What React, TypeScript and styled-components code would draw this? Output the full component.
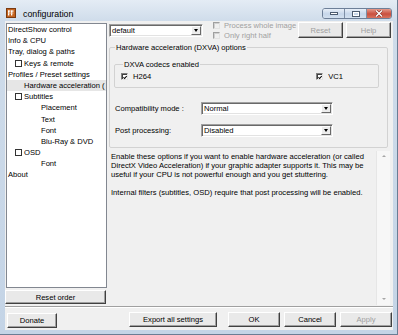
import React from "react";
import styled, { createGlobalStyle } from "styled-components";

const GlobalStyle = createGlobalStyle`
  html, body { margin: 0; padding: 0; background: #4a8ccc; }
  body {
    font-family: "Liberation Sans", Arial, sans-serif;
    font-size: 7.6px;
    color: #000;
  }
  * { box-sizing: border-box; }
`;

const Window = styled.div`
  width: 398px;
  height: 335px;
  background: linear-gradient(#e4ecf5, #cfdcea 21px, #c4d4e6);
  border-right: 1px solid #6a7d94;
  border-bottom: 1px solid #6a7d94;
  display: flex;
  flex-direction: column;
  overflow: hidden;
`;

const TitleBar = styled.div`
  height: 21px;
  flex: none;
  display: flex;
  align-items: flex-start;
  padding: 8px 5px 0 6px;
`;

const AppIcon = styled.svg`
  width: 10px;
  height: 10px;
  flex: none;
`;

const Caption = styled.div`
  margin-left: 7px;
  font-size: 8.8px;
  line-height: 12px;
  color: #000;
`;

const CaptionButtons = styled.div`
  margin-left: auto;
  display: flex;
  border: 1px solid #6d7f98;
  border-radius: 3px;
  overflow: hidden;
  height: 11px;
`;

const CaptionButton = styled.div<{ $close?: boolean; $w: number }>`
  width: ${p => p.$w}px;
  height: 100%;
  display: flex;
  align-items: center;
  justify-content: center;
  background: ${p =>
    p.$close
      ? "linear-gradient(#e59a8c, #c9503f 55%, #d8735f)"
      : "linear-gradient(#e8eff8, #c6d6ea 55%, #d3e0ef)"};
  & + & {
    border-left: 1px solid #7d8ea5;
  }
`;

const Client = styled.div`
  flex: 1;
  margin: 0 4px 4px 5px;
  background: #f0f0f0;
  display: flex;
  flex-direction: column;
`;

const Main = styled.div`
  height: 285px;
  display: flex;
`;

const LeftColumn = styled.div`
  width: 102px;
  display: flex;
  flex-direction: column;
`;

const Tree = styled.div`
  margin: 2px 0 0 1px;
  width: 101px;
  height: 265px;
  background: #fff;
  border: 1px solid #828790;
  overflow: hidden;
`;

const TreeRow = styled.div<{ $indent: number; $selected?: boolean }>`
  height: 11.2px;
  line-height: 11.2px;
  display: flex;
  align-items: center;
  padding-left: ${p => p.$indent}px;
  white-space: nowrap;
  background: ${p => (p.$selected ? "#e6e6e6" : "transparent")};
`;

const TreeCheck = styled.span`
  width: 7px;
  height: 7px;
  border: 1px solid #333;
  background: #fff;
  margin-right: 2px;
  flex: none;
`;

const Button = styled.div<{ $w: number; $h?: number; $disabled?: boolean }>`
  width: ${p => p.$w}px;
  height: ${p => p.$h ?? 15}px;
  flex: none;
  display: flex;
  align-items: center;
  justify-content: center;
  background: #e9e9e9;
  border-top: 1px solid #fff;
  border-left: 1px solid #fff;
  border-right: 1px solid #404040;
  border-bottom: 1px solid #404040;
  box-shadow: inset -1px -1px 0 #a0a0a0;
  color: ${p => (p.$disabled ? "#a0a0a0" : "#000")};
  white-space: nowrap;
`;

const RightColumn = styled.div`
  width: 283px;
  margin-left: 2px;
  display: flex;
  flex-direction: column;
`;

const TopRow = styled.div`
  height: 19px;
  display: flex;
  align-items: flex-start;
`;

const Combo = styled.div<{ $w: number }>`
  width: ${p => p.$w}px;
  height: 13px;
  flex: none;
  display: flex;
  align-items: stretch;
  background: #fff;
  border-top: 1px solid #a0a0a0;
  border-left: 1px solid #a0a0a0;
  border-right: 1px solid #fff;
  border-bottom: 1px solid #fff;
  box-shadow: inset 1px 1px 0 #696969, inset -1px -1px 0 #e3e3e3;
  padding: 1px;
`;

const ComboText = styled.div`
  flex: 1;
  padding-left: 1px;
  line-height: 10px;
`;

const ComboArrow = styled.div`
  width: 10px;
  flex: none;
  background: #ececec;
  border-top: 1px solid #fff;
  border-left: 1px solid #fff;
  border-right: 1px solid #696969;
  border-bottom: 1px solid #696969;
  display: flex;
  align-items: center;
  justify-content: center;
  &::after {
    content: "";
    border-left: 2.5px solid transparent;
    border-right: 2.5px solid transparent;
    border-top: 3px solid #000;
  }
`;

const CheckColumn = styled.div`
  margin: -1px 0 0 10px;
  display: flex;
  flex-direction: column;
`;

const CheckLine = styled.div<{ $disabled?: boolean }>`
  height: 10px;
  display: flex;
  align-items: center;
  gap: 4px;
  color: ${p => (p.$disabled ? "#a0a0a0" : "#000")};
  white-space: nowrap;
`;

const Box = styled.span<{ $disabled?: boolean }>`
  width: 7px;
  height: 7px;
  flex: none;
  display: flex;
  background: ${p => (p.$disabled ? "#f0f0f0" : "#fff")};
  border-top: 1px solid ${p => (p.$disabled ? "#a0a0a0" : "#808080")};
  border-left: 1px solid ${p => (p.$disabled ? "#a0a0a0" : "#808080")};
  border-right: 1px solid #e3e3e3;
  border-bottom: 1px solid #e3e3e3;
  box-shadow: inset 1px 1px 0 ${p => (p.$disabled ? "#d0d0d0" : "#404040")};
`;

const TopButtons = styled.div`
  margin: 1px 1px 0 auto;
  display: flex;
  gap: 3px;
`;

const Group = styled.fieldset<{ $pad: string }>`
  margin: 0;
  padding: ${p => p.$pad};
  border: 1px solid #d2d2d2;
  border-radius: 2px;
  min-width: 0;
`;

const Legend = styled.legend`
  padding: 0 1px;
  margin-left: 1px;
  line-height: 9px;
  white-space: nowrap;
`;

const OuterGroup = styled(Group)`
  width: 279px;
  margin-top: 2.5px;
`;

const InnerGroup = styled(Group)`
  width: 265px;
  margin-top: 8px;
`;

const CodecRow = styled.div`
  display: flex;
  align-items: center;
  height: 10px;
`;

const Codec = styled.div<{ $right?: boolean }>`
  display: flex;
  align-items: center;
  gap: 5px;
  margin-left: ${p => (p.$right ? "auto" : "0")};
`;

const FieldRow = styled.div<{ $top: number }>`
  display: flex;
  align-items: center;
  height: 13px;
  margin-top: ${p => p.$top}px;
`;

const FieldLabel = styled.div`
  width: 87px;
  padding-left: 1px;
  white-space: nowrap;
`;

const Description = styled.div`
  width: 281px;
  height: 156px;
  margin-top: 1px;
  display: flex;
`;

const DescText = styled.div`
  flex: 1;
  padding: 3.5px 0 0 2px;
  line-height: 9px;
  white-space: nowrap;
  color: #000;
`;

const ScrollBar = styled.div`
  width: 14px;
  margin-top: 2px;
  background: #f7f7f7;
  border-left: 1px solid #e6e6e6;
  display: flex;
  flex-direction: column;
  justify-content: space-between;
  align-items: center;
  padding: 4px 0 5px;
`;

const Arrow = styled.span<{ $down?: boolean }>`
  border-left: 2.5px solid transparent;
  border-right: 2.5px solid transparent;
  ${p => (p.$down ? "border-top" : "border-bottom")}: 2.5px solid #a6a6a6;
`;

const Separator = styled.div`
  height: 2px;
  border-top: 1px solid #a0a0a0;
  border-bottom: 1px solid #fff;
`;

const BottomBar = styled.div`
  flex: 1;
  display: flex;
  align-items: flex-start;
  padding: 4px 1px 0 2px;
`;

const BottomRight = styled.div`
  margin-left: auto;
  display: flex;
  gap: 4px;
`;

const Check = () => (
  <svg width="5" height="5" viewBox="0 0 5 5" style={{ margin: "0.5px" }}>
    <path d="M0.5 2.2 L2 3.8 L4.6 0.6" stroke="#000" strokeWidth="1.3" fill="none" />
  </svg>
);

const treeItems = [
  { text: "DirectShow control", indent: 1 },
  { text: "Info & CPU", indent: 1 },
  { text: "Tray, dialog & paths", indent: 1 },
  { text: "Keys & remote", indent: 8, check: true },
  { text: "Profiles / Preset settings", indent: 1 },
  { text: "Hardware acceleration (", indent: 17, selected: true },
  { text: "Subtitles", indent: 8, check: true },
  { text: "Placement", indent: 34 },
  { text: "Text", indent: 34 },
  { text: "Font", indent: 34 },
  { text: "Blu-Ray & DVD", indent: 34 },
  { text: "OSD", indent: 8, check: true },
  { text: "Font", indent: 34 },
  { text: "About", indent: 1 },
];

export default function App() {
  return (
    <>
      <GlobalStyle />
      <Window>
        <TitleBar>
          <AppIcon viewBox="0 0 10 10">
            <rect x="0.5" y="0.5" width="9" height="9" fill="#c4631f" stroke="#7a3a10" />
            <rect x="2" y="2.5" width="1.3" height="5" fill="#fff" />
            <rect x="2" y="2.5" width="2.6" height="1.1" fill="#fff" />
            <rect x="5" y="2.5" width="1.3" height="5" fill="#fff" />
            <rect x="5" y="2.5" width="2.6" height="1.1" fill="#fff" />
            <rect x="2" y="4.6" width="5.5" height="0.9" fill="#f3c9a8" />
          </AppIcon>
          <Caption>configuration</Caption>
          <CaptionButtons>
            <CaptionButton $w={21}>
              <svg width="8" height="3" viewBox="0 0 8 3">
                <rect x="0.5" y="0.5" width="7" height="2" fill="#fff" stroke="#4d5c70" />
              </svg>
            </CaptionButton>
            <CaptionButton $w={22}>
              <svg width="8" height="6" viewBox="0 0 8 6">
                <rect x="0.5" y="0.5" width="7" height="5" fill="none" stroke="#4d5c70" />
                <rect x="1.5" y="1.5" width="5" height="3" fill="none" stroke="#fff" />
              </svg>
            </CaptionButton>
            <CaptionButton $w={25} $close>
              <svg width="8" height="7" viewBox="0 0 8 7">
                <path d="M1 0.5 L7 6.5 M7 0.5 L1 6.5" stroke="#7a2a22" strokeWidth="2.4" />
                <path d="M1 0.5 L7 6.5 M7 0.5 L1 6.5" stroke="#fff" strokeWidth="1.4" />
              </svg>
            </CaptionButton>
          </CaptionButtons>
        </TitleBar>
        <Client>
          <Main>
            <LeftColumn>
              <Tree>
                {treeItems.map((item, i) => (
                  <TreeRow key={i} $indent={item.indent} $selected={item.selected}>
                    {item.check && <TreeCheck />}
                    {item.text}
                  </TreeRow>
                ))}
              </Tree>
              <Button $w={101} $h={14} style={{ marginTop: 2 }}>
                Reset order
              </Button>
            </LeftColumn>
            <RightColumn>
              <TopRow>
                <Combo $w={94} style={{ marginTop: 3 }}>
                  <ComboText>default</ComboText>
                  <ComboArrow />
                </Combo>
                <CheckColumn>
                  <CheckLine $disabled>
                    <Box $disabled />
                    Process whole image
                  </CheckLine>
                  <CheckLine $disabled>
                    <Box $disabled />
                    Only right half
                  </CheckLine>
                </CheckColumn>
                <TopButtons>
                  <Button $w={45} $h={16} $disabled>
                    Reset
                  </Button>
                  <Button $w={45} $h={16} $disabled>
                    Help
                  </Button>
                </TopButtons>
              </TopRow>
              <OuterGroup $pad="0 9px 10px 4px">
                <Legend>Hardware acceleration (DXVA) options</Legend>
                <InnerGroup $pad="3px 35px 5px 6px">
                  <Legend style={{ marginLeft: 2 }}>DXVA codecs enabled</Legend>
                  <CodecRow>
                    <Codec>
                      <Box>
                        <Check />
                      </Box>
                      H264
                    </Codec>
                    <Codec $right>
                      <Box>
                        <Check />
                      </Box>
                      VC1
                    </Codec>
                  </CodecRow>
                </InnerGroup>
                <FieldRow $top={14}>
                  <FieldLabel>Compatibility mode :</FieldLabel>
                  <Combo $w={132}>
                    <ComboText>Normal</ComboText>
                    <ComboArrow />
                  </Combo>
                </FieldRow>
                <FieldRow $top={9}>
                  <FieldLabel>Post processing:</FieldLabel>
                  <Combo $w={132}>
                    <ComboText>Disabled</ComboText>
                    <ComboArrow />
                  </Combo>
                </FieldRow>
              </OuterGroup>
              <Description>
                <DescText>
                  Enable these options if you want to enable hardware acceleration (or called
                  <br />
                  DirectX Video Acceleration) if your graphic adapter supports it. This may be
                  <br />
                  useful if your CPU is not powerful enough and you get stuttering.
                  <br />
                  <br />
                  Internal filters (subtitles, OSD) require that post processing will be enabled.
                </DescText>
                <ScrollBar>
                  <Arrow />
                  <Arrow $down />
                </ScrollBar>
              </Description>
            </RightColumn>
          </Main>
          <Separator />
          <BottomBar>
            <Button $w={50} style={{ marginTop: 1 }}>
              Donate
            </Button>
            <BottomRight>
              <Button $w={88} style={{ marginRight: 7 }}>
                Export all settings
              </Button>
              <Button $w={52}>OK</Button>
              <Button $w={52}>Cancel</Button>
              <Button $w={52} $disabled>
                Apply
              </Button>
            </BottomRight>
          </BottomBar>
        </Client>
      </Window>
    </>
  );
}
